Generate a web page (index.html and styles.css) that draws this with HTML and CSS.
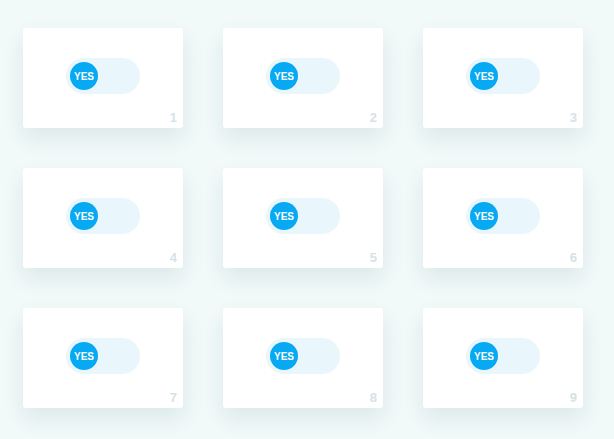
FILE: index.html
```html
<!DOCTYPE html>
<html>
<head>
<meta charset="utf-8">
<link rel="stylesheet" href="styles.css">
</head>
<body>
<div class="grid">
  <div class="card"><div class="toggle"><span class="knob">YES</span></div><span class="num">1</span></div>
  <div class="card"><div class="toggle"><span class="knob">YES</span></div><span class="num">2</span></div>
  <div class="card"><div class="toggle"><span class="knob">YES</span></div><span class="num">3</span></div>
  <div class="card"><div class="toggle"><span class="knob">YES</span></div><span class="num">4</span></div>
  <div class="card"><div class="toggle"><span class="knob">YES</span></div><span class="num">5</span></div>
  <div class="card"><div class="toggle"><span class="knob">YES</span></div><span class="num">6</span></div>
  <div class="card"><div class="toggle"><span class="knob">YES</span></div><span class="num">7</span></div>
  <div class="card"><div class="toggle"><span class="knob">YES</span></div><span class="num">8</span></div>
  <div class="card"><div class="toggle"><span class="knob">YES</span></div><span class="num">9</span></div>
</div>
</body>
</html>
```
FILE: styles.css
```css
html, body {
  margin: 0;
  padding: 0;
  background: #f1f9f9;
  font-family: "Liberation Sans", Arial, sans-serif;
}
.grid {
  display: grid;
  grid-template-columns: repeat(3, 160px);
  grid-auto-rows: 100px;
  column-gap: 40px;
  row-gap: 40px;
  padding: 28px 0 31px 23px;
}
.card {
  position: relative;
  background: #ffffff;
  border-radius: 3px;
  box-shadow: 0 10px 22px rgba(0, 70, 70, 0.09);
  display: flex;
  justify-content: center;
  align-items: flex-start;
  padding-top: 30px;
  box-sizing: border-box;
}
.toggle {
  width: 74px;
  height: 36px;
  border-radius: 18px;
  background: #e9f6fc;
  box-sizing: border-box;
  padding: 4px;
  display: flex;
  align-items: center;
}
.knob {
  width: 28px;
  height: 28px;
  border-radius: 50%;
  background: #07a9f2;
  color: #ffffff;
  font-weight: bold;
  font-size: 10px;
  display: flex;
  align-items: center;
  justify-content: center;
}
.num {
  position: absolute;
  right: 6px;
  bottom: 3px;
  font-size: 13px;
  font-weight: bold;
  color: #d5e2e7;
}
```
